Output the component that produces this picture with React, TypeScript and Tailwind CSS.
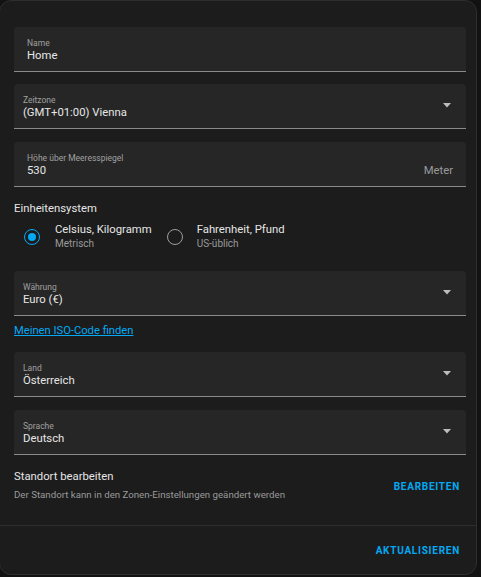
import React from "react";

function Arrow() {
  return (
    <svg width="8" height="5" viewBox="0 0 8 5" className="absolute right-[15px] top-[19px]">
      <path d="M0 0 L8 0 L4 4.5 Z" fill="#bdbdbd" />
    </svg>
  );
}

function Field({
  label,
  value,
  select,
  suffix,
  padX,
  className,
}: {
  label: string;
  value: string;
  select?: boolean;
  suffix?: string;
  padX: string;
  className?: string;
}) {
  return (
    <div
      className={`relative h-[45px] bg-[#262626] rounded-t-[4px] border-b border-[#8a8a8a] flex flex-col pt-[11px] ${padX} ${className ?? ""}`}
    >
      <div className="text-[8.5px] leading-[10px] text-[#a0a0a0]">{label}</div>
      <div className="mt-[1px] text-[11.3px] leading-[14px] text-[#e6e6e6]">{value}</div>
      {select && <Arrow />}
      {suffix && (
        <div className="absolute right-[13px] top-[22px] text-[11.3px] leading-[14px] text-[#9a9a9a]">{suffix}</div>
      )}
    </div>
  );
}

function Radio({ checked }: { checked?: boolean }) {
  return (
    <div
      className={`w-[16px] h-[16px] rounded-full border-[1.6px] flex items-center justify-center ${
        checked ? "border-[#03a9f4]" : "border-[#9e9e9e]"
      }`}
    >
      {checked && <div className="w-[8.5px] h-[8.5px] rounded-full bg-[#03a9f4]" />}
    </div>
  );
}

export default function App() {
  return (
    <div className="w-[481px] h-[577px] bg-[#121212] font-['Roboto',sans-serif] overflow-hidden">
      <div className="ml-[-1px] w-[478px] h-[575px] bg-[#1c1c1c] border border-[#2e2e2e] rounded-[12px] flex flex-col">
        <div className="pl-[14px] pr-[10px] pt-[26px]">
          <Field label="Name" value="Home" padX="pl-[13px]" />
          <Field label="Zeitzone" value="(GMT+01:00) Vienna" select padX="pl-[9px]" className="mt-[12px]" />
          <Field label="Höhe über Meeresspiegel" value="530" suffix="Meter" padX="pl-[13px]" className="mt-[13px]" />
          <div className="mt-[14px] text-[11.3px] leading-[16px] text-[#e6e6e6]">Einheitensystem</div>
          <div className="mt-[6px] flex items-start">
            <div className="flex items-center mt-[6px] ml-[10px]">
              <Radio checked />
            </div>
            <div className="ml-[15px] flex flex-col">
              <div className="text-[11.3px] leading-[14px] text-[#e6e6e6]">Celsius, Kilogramm</div>
              <div className="text-[10px] leading-[14px] text-[#9a9a9a]">Metrisch</div>
            </div>
            <div className="flex items-center mt-[6px] ml-[15px]">
              <Radio />
            </div>
            <div className="ml-[14px] flex flex-col">
              <div className="text-[11.3px] leading-[14px] text-[#e6e6e6]">Fahrenheit, Pfund</div>
              <div className="text-[10px] leading-[14px] text-[#9a9a9a]">US-üblich</div>
            </div>
          </div>
          <Field label="Währung" value="Euro (€)" select padX="pl-[9px]" className="mt-[20px]" />
          <div className="mt-[8px] text-[11.2px] leading-[14px] text-[#03a9f4] underline">Meinen ISO-Code finden</div>
          <Field label="Land" value="Österreich" select padX="pl-[9px]" className="mt-[14px]" />
          <Field label="Sprache" value="Deutsch" select padX="pl-[9px]" className="mt-[13px]" />
          <div className="mt-[15px] flex items-center justify-between">
            <div className="flex flex-col">
              <div className="text-[11.3px] leading-[14px] text-[#e6e6e6]">Standort bearbeiten</div>
              <div className="mt-[4px] text-[9.7px] leading-[14px] text-[#9a9a9a]">
                Der Standort kann in den Zonen-Einstellungen geändert werden
              </div>
            </div>
            <div className="mr-[6px] text-[10px] font-bold tracking-[0.75px] text-[#03a9f4]">BEARBEITEN</div>
          </div>
        </div>
        <div className="mt-auto h-[49px] border-t border-[#2e2e2e] flex items-center justify-end pr-[16px]">
          <div className="text-[10px] font-bold tracking-[0.75px] text-[#03a9f4]">AKTUALISIEREN</div>
        </div>
      </div>
    </div>
  );
}
